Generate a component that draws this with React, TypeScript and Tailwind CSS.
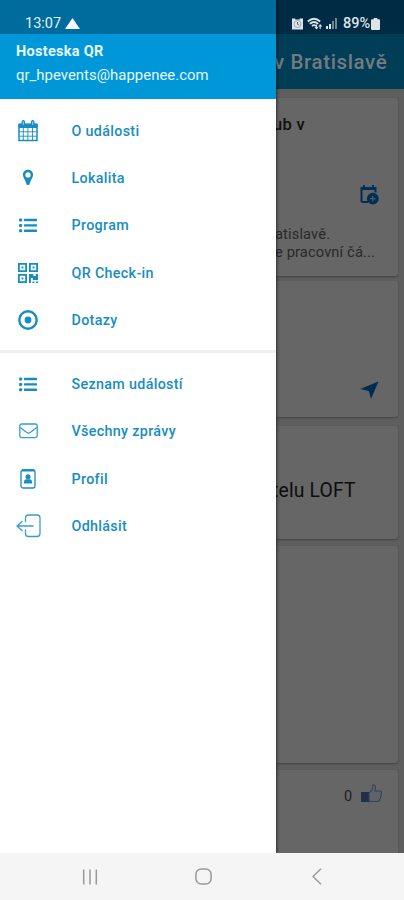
import React from "react";

const CalendarIcon = () => (
  <svg width="20" height="22" viewBox="0 0 20 22" fill="none" stroke="currentColor">
    <path d="M1 4.5h18v16H1z" strokeWidth="1.5" />
    <path d="M1 4h18v3.5H1z" fill="currentColor" strokeWidth="1" />
    <path d="M5.3 7v13M9.9 7v13M14.500 7v13M1 11.800h18M1 16.200h18" strokeWidth="0.9" />
    <path d="M5.300 1.900v2.800M14.700 1.900v2.800" strokeWidth="3.600" strokeLinecap="round" />
    <path d="M5.300 2v2.500M14.700 2v2.500" stroke="#a9d6ec" strokeWidth="1" strokeLinecap="round" />
  </svg>
);

const PinIcon = () => (
  <svg width="12" height="17" viewBox="0 0 12 17" fill="currentColor">
    <path fillRule="evenodd" d="M6 .8C2.900.8.900 3 .900 5.800c0 2.600 2.300 5 3.500 9.200.4 1.500 2.800 1.500 3.200 0 1.200-4.200 3.500-6.600 3.500-9.200C11.100 3 9.100.8 6 .8zm0 2.500a2.600 2.600 0 1 1 0 5.200 2.600 2.600 0 0 1 0-5.200z" />
  </svg>
);

const ListIcon = () => (
  <svg width="18" height="15" viewBox="0 0 18 15" fill="currentColor">
    <rect x="0" y="0.500" width="3.200" height="3" rx="1" />
    <rect x="0" y="5.900" width="3.200" height="3" rx="1" />
    <rect x="0" y="11.300" width="3.200" height="3" rx="1" />
    <rect x="5" y="0.800" width="13" height="2.400" rx="0.500" />
    <rect x="5" y="6.200" width="13" height="2.400" rx="0.500" />
    <rect x="5" y="11.600" width="13" height="2.400" rx="0.500" />
  </svg>
);

const QrIcon = () => (
  <svg width="20" height="20" viewBox="0 0 20 20" fill="currentColor">
    <path fillRule="evenodd" d="M0 0h9v9H0zM1.800 1.800v5.400h5.400V1.800zM11 0h9v9h-9zM12.800 1.800v5.400h5.400V1.800zM0 11h9v9H0zM1.800 12.800v5.400h5.400v-5.400z" />
    <path d="M3.600 3.600h1.800v1.800H3.600zM14.600 3.600h1.800v1.800h-1.800zM3.600 14.600h1.800v1.800H3.600zM11 11h4.300v2.100h2.500V11H20v6h-5.200v-2.100h-1.900V20H11zM14.500 18.500h2V20h-2zM18 18.500h2V20h-2z" />
  </svg>
);

const TargetIcon = () => (
  <svg width="20" height="20" viewBox="0 0 20 20">
    <circle cx="10" cy="10" r="8.700" fill="none" stroke="currentColor" strokeWidth="2.400" />
    <circle cx="10" cy="10" r="3.400" fill="currentColor" />
  </svg>
);

const MailIcon = () => (
  <svg width="19" height="16" viewBox="0 0 19 16" fill="none" stroke="currentColor" strokeWidth="1.300" opacity="0.850">
    <rect x="0.800" y="1" width="17.400" height="13.600" rx="1.800" />
    <path d="M1.200 4.500l6.300 4.800q2 1.500 4 0l6.300-4.800" />
  </svg>
);

const BadgeIcon = () => (
  <svg width="16" height="21" viewBox="0 0 16 21" fill="none" stroke="currentColor">
    <rect x="1" y="2" width="14" height="18" rx="2" strokeWidth="1.300" />
    <path d="M2 2.300h12M4.300 1v2M11.700 1v2" strokeWidth="2.300" />
    <circle cx="8" cy="8.700" r="2.500" fill="currentColor" stroke="none" />
    <path d="M4 15.500v-2q0-2.300 2.500-2.300h3q2.500 0 2.500 2.300v2z" fill="currentColor" stroke="none" />
  </svg>
);

const LogoutIcon = () => (
  <svg width="25" height="24" viewBox="0 0 25 24" fill="none" stroke="currentColor" strokeWidth="1.300" strokeLinecap="round" strokeLinejoin="round" opacity="0.850">
    <path d="M9.500 7.500V4q0-3 3-3H21q3 0 3 3v15.500q0 3-3 3h-8.500q-3 0-3-3V16" />
    <path d="M17 12H1M6 7.500L1 12l5 4.500" />
  </svg>
);

type Item = { label: string; icon: React.ReactNode };

const primary: Item[] = [
  { label: "O události", icon: <CalendarIcon /> },
  { label: "Lokalita", icon: <PinIcon /> },
  { label: "Program", icon: <ListIcon /> },
  { label: "QR Check-in", icon: <QrIcon /> },
  { label: "Dotazy", icon: <TargetIcon /> },
];

const secondary: Item[] = [
  { label: "Seznam událostí", icon: <ListIcon /> },
  { label: "Všechny zprávy", icon: <MailIcon /> },
  { label: "Profil", icon: <BadgeIcon /> },
  { label: "Odhlásit", icon: <LogoutIcon /> },
];

const Menu = ({ items }: { items: Item[] }) => (
  <ul>
    {items.map((item) => (
      <li key={item.label} className="flex h-[47.3px] items-center pl-[14px] text-[#178dc3]">
        <span className="flex w-7 shrink-0 items-center justify-center">{item.icon}</span>
        <span className="ml-[29.5px] whitespace-nowrap text-[14.300px] leading-5 font-medium tracking-[0.023em]">{item.label}</span>
      </li>
    ))}
  </ul>
);

const Drawer = () => (
  <aside className="z-10 flex w-[276px] shrink-0 flex-col bg-white shadow-[1px_0_3px_rgba(0,0,0,0.55)]">
    <div className="flex h-[34px] items-center bg-[#006b9d] pt-[13px] pl-[25px] text-[#e3f1f7]">
      <span className="text-[14.500px] leading-5">13:07</span>
      <svg className="ml-[4px]" width="15" height="11" viewBox="0 0 15 11" fill="#f2fbff"><path d="M7.500 0L15 11H0z" /></svg>
    </div>
    <div className="h-[65px] bg-[#0097d9] pt-[8px] pl-4 text-[#e6f7ff]">
      <p className="text-[14.500px] leading-5 font-bold tracking-[0.020em]">Hosteska QR</p>
      <p className="mt-[3px] text-[14.900px] leading-5 tracking-[0.002em]">qr_hpevents@happenee.com</p>
    </div>
    <nav className="pt-[8px]">
      <Menu items={primary} />
      <div className="mt-[7px] mb-[7px] h-[3px] bg-[#f0f0f0]" />
      <Menu items={secondary} />
    </nav>
  </aside>
);

const CARD = "mr-[6px] shrink-0 overflow-hidden rounded-r-[3px] bg-[#666666] shadow-[0_1px_2px_rgba(0,0,0,0.3)] whitespace-nowrap";

const EventPage = () => (
  <main className="flex min-w-0 flex-1 flex-col overflow-hidden bg-[#5e5e5e]">
    <div className="flex h-[34px] shrink-0 items-center bg-[#002b45] pt-[13px] pl-[16px] text-[#dce4e9]">
      <svg width="11" height="12" viewBox="0 0 11 12">
        <path d="M0 .5h3.200v1h4.600v-1H11v11H0z" fill="currentColor" />
        <circle cx="5.500" cy="6" r="3.500" fill="none" stroke="#8094a2" strokeWidth="0.700" />
        <path d="M5.500 4v2.200l1.600.8" fill="none" stroke="#42596b" strokeWidth="0.900" />
      </svg>
      <svg className="ml-[4px]" width="16" height="13" viewBox="0 0 16 13" fill="none" stroke="currentColor">
        <path d="M.8 4.500q6.200-5.500 12.400 0M2.800 6.800q4.200-3.600 8.400 0M5 9q2-1.700 4 0" strokeWidth="1.700" />
        <path d="M9.500 7.500v4M8 10l1.500 1.700L11 10M13.200 12V8M11.700 9.500l1.500-1.700 1.500 1.700" strokeWidth="1.100" />
      </svg>
      <svg className="ml-[3px]" width="11" height="11" viewBox="0 0 11 11" fill="currentColor">
        <path d="M0 8h2v3H0zM3 6h2v5H3z" />
        <path d="M6 3h2v8H6zM9 0h2v11H9z" opacity="0.500" />
      </svg>
      <span className="ml-[6px] text-[14.500px] leading-5 font-medium">89%</span>
      <svg className="ml-px" width="9" height="12" viewBox="0 0 9 12" fill="currentColor"><path d="M2.700 0h3.600v1.200H8q1 0 1 1v8.600q0 1.200-1 1.200H1q-1 0-1-1.200V2.200q0-1 1-1h1.700z" /></svg>
    </div>
    <header className="flex h-[55px] shrink-0 items-center bg-[#003d57] text-[#747b80]">
      <h1 className="-ml-[2px] whitespace-nowrap text-[20.500px] leading-6 font-medium tracking-[0.030em]">v Bratislavě</h1>
    </header>

    <section className={CARD + " mt-[9px] h-[178px]"}>
      <p className="mt-[17px] -ml-[3px] text-[16.500px] leading-5 font-medium tracking-[0.020em] text-[#101010]">ub v</p>
      <svg className="mt-[50px] ml-[84px]" width="19" height="20" viewBox="0 0 19 20" fill="none" stroke="#002f55">
        <path d="M1.500 17V3h14v4.500M1.500 17H8" strokeWidth="2" />
        <path d="M1 3.500h15" strokeWidth="3.200" />
        <path d="M4 0v3M13 0v3" strokeWidth="2" />
        <circle cx="12.800" cy="13.700" r="5.900" fill="#002f55" stroke="none" />
        <path d="M12.800 10.800v5.800M9.900 13.700h5.800" stroke="#4c5862" strokeWidth="1.300" />
      </svg>
      <div className="mt-[20px] -ml-[1px] text-[14.700px] leading-[18px] tracking-[0.008em] text-[#292929]">
        <p>atislavě.</p>
        <p>e pracovní čá...</p>
      </div>
    </section>

    <section className={CARD + " mt-[5px] h-[136px] pt-[100px] pl-[84px]"}>
      <svg width="19" height="19" viewBox="0 0 19 19" fill="#002c50"><path d="M18.500.5L11 18 8.800 9.900.2 8z" /></svg>
    </section>

    <section className={CARD + " mt-[9px] h-[113px] pt-[53px]"}>
      <p className="-ml-[4px] text-[19.300px] leading-6 tracking-[0.010em] text-[#0d0d0d]">telu LOFT</p>
    </section>

    <section className={CARD + " mt-[7px] h-[217px]"} />

    <section className={CARD + " mt-[7px] flex h-[90px] items-start pt-[17px] pl-[68px]"}>
      <span className="text-[14.500px] leading-5 text-[#1f1f1f]">0</span>
      <svg className="ml-[9px] -mt-[3px]" width="22" height="20" viewBox="0 0 22 20">
        <path d="M0 8h8v10H0z" fill="#222f48" />
        <path d="M8 9l3-3 1-5q2.800-.5 2.500 3L14 7h5.500q1.800 1.300.5 3 1 1.500-.5 3 .5 1.500-1 2.500 0 2-2 2H9l-1-1z" fill="#5f6468" stroke="#364258" strokeWidth="1.100" />
      </svg>
    </section>
  </main>
);

const SystemBar = () => (
  <footer className="z-20 flex h-[47px] items-center bg-[#f5f5f5] text-[#999999]">
    <svg className="ml-[82px]" width="16" height="16" viewBox="0 0 16 16" fill="none" stroke="currentColor" strokeWidth="1.500">
      <path d="M1.700 .5v15M8 .5v15M14.300 .5v15" />
    </svg>
    <svg className="ml-[97px]" width="17" height="17" viewBox="0 0 17 17" fill="none" stroke="currentColor" strokeWidth="1.500">
      <rect x="0.900" y="0.900" width="15.200" height="15.200" rx="5.500" />
    </svg>
    <svg className="ml-[100px]" width="10" height="17" viewBox="0 0 10 17" fill="none" stroke="currentColor" strokeWidth="1.500">
      <path d="M9 .8L1 8.500l8 7.700" />
    </svg>
  </footer>
);

export default function App() {
  return (
    <div className="flex h-[900px] w-[404px] flex-col overflow-hidden bg-white font-[Roboto,sans-serif]">
      <div className="flex h-[853px] shrink-0 overflow-hidden">
        <Drawer />
        <EventPage />
      </div>
      <SystemBar />
    </div>
  );
}
